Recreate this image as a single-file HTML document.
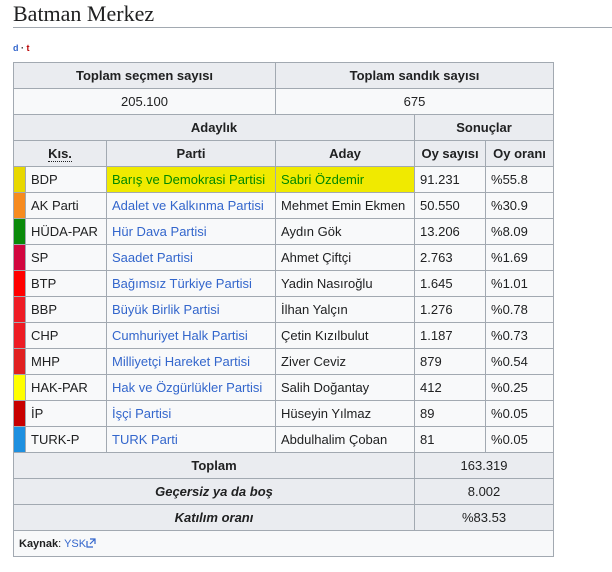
<!DOCTYPE html><html><head><meta charset="utf-8"><style>
body{margin:0;background:#fff;font-family:"Liberation Sans",Arial,sans-serif;font-size:13px;color:#202122}
h2{position:absolute;left:13px;top:0;margin:0;font-family:"Liberation Serif",serif;font-weight:normal;font-size:22px;line-height:28px;width:599px;border-bottom:1px solid #a2a9b1;height:27px}
.dt{position:absolute;left:13px;top:43px;font-size:9px;font-weight:bold}
table{position:absolute;left:13px;top:62px;border-collapse:collapse;table-layout:fixed;background:#f8f9fa;width:540px}
td,th{border:1px solid #a2a9b1;height:25px;padding:0 5px;white-space:nowrap;overflow:hidden}
th{background:#eaecf0;text-align:center}
a{color:#3366cc;text-decoration:none}
.s{padding:0}
.hl{background:#f0ea00}
.hl a,.hl span{color:#008800}
</style></head><body>
<h2>Batman Merkez</h2>
<div class="dt"><a>d</a> · <span style="color:#ba0000">t</span></div>
<table>
<colgroup><col style="width:12px"><col style="width:81px"><col style="width:169px"><col style="width:139px"><col style="width:71px"><col style="width:68px"></colgroup>
<tr><th colspan="3">Toplam seçmen sayısı</th><th colspan="3">Toplam sandık sayısı</th></tr>
<tr><td colspan="3" style="text-align:center">205.100</td><td colspan="3" style="text-align:center">675</td></tr>
<tr><th colspan="4">Adaylık</th><th colspan="2">Sonuçlar</th></tr>
<tr><th colspan="2"><span style="border-bottom:1px dotted #202122">Kıs.</span></th><th>Parti</th><th>Aday</th><th>Oy sayısı</th><th>Oy oranı</th></tr>
<tr><td class="s" style="background:#e8d800"></td><td>BDP</td><td class="hl"><a>Barış ve Demokrasi Partisi</a></td><td class="hl"><span>Sabri Özdemir</span></td><td>91.231</td><td>%55.8</td></tr>
<tr><td class="s" style="background:#f68b1f"></td><td>AK Parti</td><td><a>Adalet ve Kalkınma Partisi</a></td><td>Mehmet Emin Ekmen</td><td>50.550</td><td>%30.9</td></tr>
<tr><td class="s" style="background:#0a8a0a"></td><td>HÜDA-PAR</td><td><a>Hür Dava Partisi</a></td><td>Aydın Gök</td><td>13.206</td><td>%8.09</td></tr>
<tr><td class="s" style="background:#d2063f"></td><td>SP</td><td><a>Saadet Partisi</a></td><td>Ahmet Çiftçi</td><td>2.763</td><td>%1.69</td></tr>
<tr><td class="s" style="background:#ff0000"></td><td>BTP</td><td><a>Bağımsız Türkiye Partisi</a></td><td>Yadin Nasıroğlu</td><td>1.645</td><td>%1.01</td></tr>
<tr><td class="s" style="background:#ee1c25"></td><td>BBP</td><td><a>Büyük Birlik Partisi</a></td><td>İlhan Yalçın</td><td>1.276</td><td>%0.78</td></tr>
<tr><td class="s" style="background:#ed1c24"></td><td>CHP</td><td><a>Cumhuriyet Halk Partisi</a></td><td>Çetin Kızılbulut</td><td>1.187</td><td>%0.73</td></tr>
<tr><td class="s" style="background:#e02020"></td><td>MHP</td><td><a>Milliyetçi Hareket Partisi</a></td><td>Ziver Ceviz</td><td>879</td><td>%0.54</td></tr>
<tr><td class="s" style="background:#ffff00"></td><td>HAK-PAR</td><td><a>Hak ve Özgürlükler Partisi</a></td><td>Salih Doğantay</td><td>412</td><td>%0.25</td></tr>
<tr><td class="s" style="background:#c80000"></td><td>İP</td><td><a>İşçi Partisi</a></td><td>Hüseyin Yılmaz</td><td>89</td><td>%0.05</td></tr>
<tr><td class="s" style="background:#1e90e0"></td><td>TURK-P</td><td><a>TURK Parti</a></td><td>Abdulhalim Çoban</td><td>81</td><td>%0.05</td></tr>
<tr><th colspan="4">Toplam</th><td colspan="2" style="text-align:center;background:#eaecf0">163.319</td></tr>
<tr><th colspan="4"><i>Geçersiz ya da boş</i></th><td colspan="2" style="text-align:center;background:#eaecf0">8.002</td></tr>
<tr><th colspan="4"><i>Katılım oranı</i></th><td colspan="2" style="text-align:center;background:#eaecf0">%83.53</td></tr>
<tr><td colspan="6" style="font-size:11px"><b>Kaynak</b>: <a>YSK</a><svg width="10" height="10" viewBox="0 0 10 10" style="vertical-align:-1px"><path d="M1 3v6h6M4 1h5v5M9 1L4 6" fill="none" stroke="#3366cc" stroke-width="1.2"/></svg></td></tr>
</table>
</body></html>
